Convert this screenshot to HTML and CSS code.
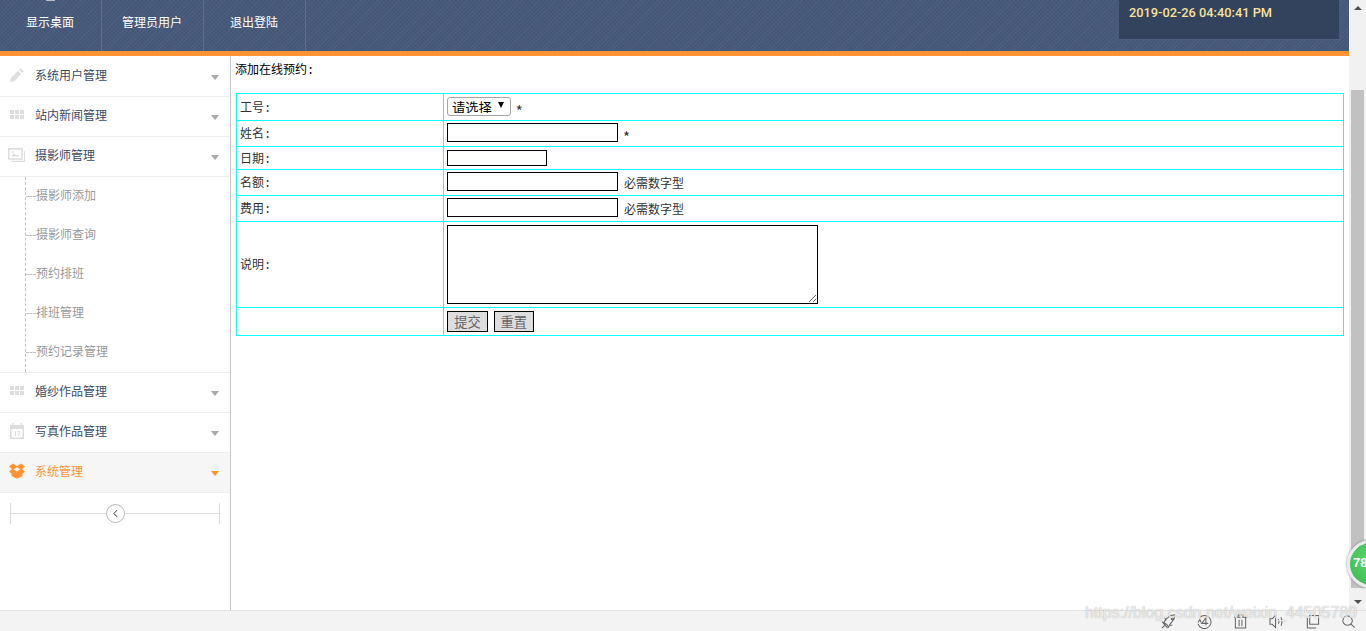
FILE: index.html
```html
<!DOCTYPE html>
<html lang="en">
<head>
    <meta charset="UTF-8">
    <meta name="viewport" content="width=device-width, initial-scale=1.0">
    <title>添加在线预约</title>
    <link rel="stylesheet" href="styles.css">
</head>
<body>
    <div class="window">
        <div class="page">
            <header class="topbar">
                <span class="logo-edge"></span>
                <nav class="topnav">
                    <a class="topnav-item">显示桌面</a>
                    <a class="topnav-item">管理员用户</a>
                    <a class="topnav-item">退出登陆</a>
                </nav>
                <div class="clock">2019-02-26 04:40:41 PM</div>
            </header>
            <div class="main">
                <aside class="sidebar">
                    <div class="menu-item">
                        <svg class="menu-icon" viewBox="0 0 16 16"><path d="M11.500 1.200l3.300 3.300-1.600 1.600-3.300-3.300zM9 3.700l3.300 3.300-7.200 7.200-4.100.9.900-4.200z"/></svg>
                        <span class="menu-label">系统用户管理</span>
                        <i class="menu-arrow"></i>
                    </div>
                    <div class="menu-item">
                        <svg class="menu-icon" viewBox="0 0 16 16"><path d="M1 3h4v4H1zM6 3h4v4H6zM11 3h4v4h-4zM1 8h4v4H1zM6 8h4v4H6zM11 8h4v4h-4z"/></svg>
                        <span class="menu-label">站内新闻管理</span>
                        <i class="menu-arrow"></i>
                    </div>
                    <div class="menu-item">
                        <svg class="menu-icon menu-icon-wide" viewBox="0 0 16 16"><path fill-rule="evenodd" d="M0 1h14v11H0zM1.500 2.500v8h11v-8zM3 9l2.500-3 2 2 1.500-1 2 2zM3.500 4h2v1.500h-2zM15 4h1v10H3v-1h12z"/></svg>
                        <span class="menu-label">摄影师管理</span>
                        <i class="menu-arrow"></i>
                    </div>
                    <ul class="submenu">
                        <li class="submenu-item">摄影师添加</li>
                        <li class="submenu-item">摄影师查询</li>
                        <li class="submenu-item">预约排班</li>
                        <li class="submenu-item">排班管理</li>
                        <li class="submenu-item">预约记录管理</li>
                    </ul>
                    <div class="menu-item">
                        <svg class="menu-icon" viewBox="0 0 16 16"><path d="M1 3h4v4H1zM6 3h4v4H6zM11 3h4v4h-4zM1 8h4v4H1zM6 8h4v4H6zM11 8h4v4h-4z"/></svg>
                        <span class="menu-label">婚纱作品管理</span>
                        <i class="menu-arrow"></i>
                    </div>
                    <div class="menu-item">
                        <svg class="menu-icon" viewBox="0 0 16 16"><path fill-rule="evenodd" d="M1 2h2V0h1.500v2h7V0H13v2h2v14H1zM2.500 6v8.500h11V6zM6 8h1v5H6zM8.500 8H11v1l-1.200 4h-1l1.200-4H8.500z"/></svg>
                        <span class="menu-label">写真作品管理</span>
                        <i class="menu-arrow"></i>
                    </div>
                    <div class="menu-item is-active">
                        <svg class="menu-icon" viewBox="0 0 16 16"><path d="M4 .5l4 2.700L12 .5l4 3-3 2.600 3 2.600-2.500 1.800V13L8 15.800 2.500 13v-2.500L0 8.700l3-2.600-3-2.600zM8 4.300L4.600 6.300 8 8.500l3.400-2.200z"/></svg>
                        <span class="menu-label">系统管理</span>
                        <i class="menu-arrow"></i>
                    </div>
                    <div class="collapse-bar">
                        <button class="collapse-btn" type="button">
                            <svg viewBox="0 0 8 8"><path d="M5.500 1L2.500 4l3 3" fill="none" stroke="#222" stroke-width="0.800"/></svg>
                        </button>
                    </div>
                </aside>
                <section class="content">
                    <p class="content-title">添加在线预约:</p>
                    <table class="form-table">
                        <tr class="row-gonghao">
                            <td class="cell-label">工号:</td>
                            <td class="cell-field">
                                <span class="select-wrap"><select class="field-select"><option>请选择</option></select></span>
                                <span class="field-star field-star-first">*</span>
                            </td>
                        </tr>
                        <tr class="row-name">
                            <td class="cell-label">姓名:</td>
                            <td class="cell-field"><input class="field-input" type="text"><span class="field-star">*</span></td>
                        </tr>
                        <tr class="row-date">
                            <td class="cell-label">日期:</td>
                            <td class="cell-field"><input class="field-input field-date" type="text"></td>
                        </tr>
                        <tr class="row-num">
                            <td class="cell-label">名额:</td>
                            <td class="cell-field"><input class="field-input" type="text"><span class="field-note">必需数字型</span></td>
                        </tr>
                        <tr class="row-num">
                            <td class="cell-label">费用:</td>
                            <td class="cell-field"><input class="field-input" type="text"><span class="field-note">必需数字型</span></td>
                        </tr>
                        <tr class="row-desc">
                            <td class="cell-label">说明:</td>
                            <td class="cell-field"><textarea class="field-text"></textarea></td>
                        </tr>
                        <tr class="row-actions">
                            <td class="cell-label"></td>
                            <td class="cell-field">
                                <button class="form-btn" type="button">提交</button>
                                <button class="form-btn" type="button">重置</button>
                            </td>
                        </tr>
                    </table>
                </section>
            </div>
        </div>
        <div class="scrollbar">
            <i class="scroll-up"></i>
            <div class="scroll-track"><div class="scroll-thumb"></div></div>
            <i class="scroll-down"></i>
        </div>
    </div>
    <footer class="statusbar">
        <svg class="status-icon" viewBox="0 0 16 16"><path d="M1 15l4-4M5 6l5-4.500 4.500-.5-.5 4.500L9.500 11 8 14l-2-3-3-2zM4 4l1.500 3M9 12l3 0M12 4a1 1 0 1 1-.01 0M1 8l6 7"/></svg>
        <svg class="status-icon" viewBox="0 0 16 16"><path d="M3 3.500a7 7 0 1 1-1.800 7M1 9l2-3 1.500 3M9.500 4L5 10h7M9.500 4v8"/></svg>
        <svg class="status-icon" viewBox="0 0 16 16"><path d="M1 3.500h14M5.500 3.500V1h5v2.500M2.500 3.500V15h11V3.500M6.500 6v7M9.500 6v7"/></svg>
        <svg class="status-icon" viewBox="0 0 16 16"><path d="M7 1.500L3.500 5H1v6h2.500L7 14.500zM10 5.500c.8 1.600.8 3.400 0 5M12.800 3.500c1.300 2.900 1.300 6.100 0 9"/></svg>
        <svg class="status-icon" viewBox="0 0 16 16"><path d="M5 1.500h9.500V11H5zM2.500 4v11H12"/></svg>
        <svg class="status-icon" viewBox="0 0 16 16"><path d="M7 2a5 5 0 1 0 .01 0M10.500 10.500l4 4"/></svg>
    </footer>
    <div class="speed-ball"><span class="speed-num">78</span></div>
    <div class="watermark">https://blog.csdn.net/weixin_44505789</div>
</body>
</html>
```

FILE: styles.css
```css
* {
    box-sizing: border-box;
}

body {
    margin: 0;
    height: 100vh;
    overflow: hidden;
    position: relative;
    display: flex;
    flex-direction: column;
    background: #fff;
    color: #333;
    font-family: "Noto Sans CJK SC", "Liberation Sans", sans-serif;
    font-size: 12px;
}

.window {
    flex: 1;
    min-height: 0;
    display: flex;
}

.page {
    flex: 1;
    min-width: 0;
    display: flex;
    flex-direction: column;
}

/* top bar */
.topbar {
    height: 56px;
    flex: none;
    position: relative;
    display: flex;
    justify-content: space-between;
    border-bottom: 5px solid #ff9334;
    background-color: #47597a;
    background-image:
        repeating-linear-gradient(135deg, rgba(255, 255, 255, 0.035) 0, rgba(255, 255, 255, 0.035) 1px, transparent 1px, transparent 3px),
        repeating-linear-gradient(45deg, rgba(0, 0, 0, 0.04) 0, rgba(0, 0, 0, 0.04) 1px, transparent 1px, transparent 3px);
}

.logo-edge {
    position: absolute;
    left: 46px;
    top: 0;
    width: 9px;
    height: 1px;
    background: #b9bdc6;
}

.topnav {
    display: flex;
}

.topnav-item {
    width: 102px;
    padding: 13px 1px 0 0;
    line-height: 17px;
    text-align: center;
    color: #fff;
    border-right: 1px solid #5c6d8d;
}

.clock {
    width: 220px;
    height: 40px;
    margin-right: 10px;
    padding: 5px 10px;
    background: #34435d;
    border-bottom: 1px solid #4f6180;
    color: #f7e09c;
    font-family: Roboto, "Liberation Sans", sans-serif;
    font-size: 12.800px;
    font-weight: 500;
    line-height: 16px;
}

.main {
    flex: 1;
    min-height: 0;
    display: flex;
}

/* sidebar */
.sidebar {
    width: 231px;
    flex: none;
    padding-top: 1px;
    border-right: 1px solid #c8c8c8;
}

.menu-item {
    height: 40px;
    display: flex;
    align-items: center;
    padding: 0 11px 5px 9px;
    border-bottom: 1px solid #eee;
    color: #3d4b66;
}

.menu-icon {
    width: 16px;
    height: 16px;
    margin-top: 2px;
    fill: #ddd;
    flex: none;
}

.menu-icon-wide {
    width: 17px;
    height: 17px;
    margin-left: -1px;
}

.menu-label {
    flex: 1;
    margin-left: 10px;
}

.menu-arrow {
    width: 0;
    height: 0;
    margin-top: 6px;
    border-left: 4.500px solid transparent;
    border-right: 4.500px solid transparent;
    border-top: 5px solid #aaa;
}

.is-active {
    background: #f6f6f6;
    color: #ff9334;
}

.is-active .menu-icon {
    fill: #ff9334;
}

.is-active .menu-arrow {
    border-top-color: #ff9334;
}

.submenu {
    margin: 0 0 0 25px;
    padding: 0;
    list-style: none;
    height: 195px;
    border-left: 1px dashed #c4c4c4;
}

.submenu-item {
    height: 39px;
    display: flex;
    align-items: center;
    padding-bottom: 5px;
    color: #999;
}

.submenu-item::before {
    content: "";
    position: relative;
    top: 2px;
    width: 10px;
    border-top: 1px dashed #c4c4c4;
}

.submenu + .menu-item {
    height: 41px;
    border-top: 1px solid #eee;
}

.collapse-bar {
    height: 21px;
    margin: 10px 10px 0;
    display: flex;
    justify-content: center;
    align-items: center;
    border-left: 1px solid #ddd;
    border-right: 1px solid #ddd;
    background: linear-gradient(#ddd, #ddd) center / 100% 1px no-repeat;
}

.collapse-btn {
    width: 19px;
    height: 19px;
    padding: 0;
    border: 1px solid #bbb;
    border-radius: 50%;
    background: #fff;
    display: flex;
    align-items: center;
    justify-content: center;
}

.collapse-btn svg {
    width: 9px;
    height: 9px;
}

/* form */
.content {
    flex: 1;
    min-width: 0;
    padding: 4px 5px 0;
}

.content-title {
    margin: 0 0 11px -1px;
    height: 22px;
    line-height: 22px;
    color: #000;
    font-family: "Liberation Mono", "Noto Sans CJK SC", monospace;
}

.form-table {
    width: 100%;
    border-collapse: collapse;
    table-layout: fixed;
}

.form-table td {
    padding: 0 0 0 3px;
    border: 1px solid #1ff;
    vertical-align: middle;
}

.form-table .cell-label {
    width: 207px;
    padding-top: 2px;
    line-height: 16px;
    font-family: "Liberation Mono", "Noto Sans CJK SC", monospace;
}

.form-table .row-gonghao .cell-label,
.form-table .row-date .cell-label {
    padding-top: 4px;
}

.row-gonghao { height: 27px; }
.row-name { height: 26px; }
.row-date { height: 23px; }
.row-num { height: 26px; }
.row-desc { height: 86px; }
.row-actions { height: 28px; }

.field-input {
    width: 171px;
    height: 19px;
    padding: 0 2px;
    margin-bottom: 2px;
    border: 1px solid #000;
    vertical-align: middle;
}

.field-date {
    width: 100px;
    height: 16px;
}

.field-note {
    margin-left: 6px;
    line-height: 16px;
    vertical-align: middle;
}

.field-star {
    position: relative;
    top: 3px;
    margin-left: 5px;
    font-size: 15px;
    line-height: 16px;
    vertical-align: middle;
}

.field-star-first {
    top: 4px;
    margin-left: 2px;
}

.select-wrap {
    position: relative;
    display: inline-block;
    margin-bottom: 2px;
    vertical-align: middle;
}

.select-wrap::after {
    content: "";
    position: absolute;
    right: 7px;
    top: 5px;
    border-left: 3.500px solid transparent;
    border-right: 3.500px solid transparent;
    border-top: 6px solid #000;
}

.field-select {
    display: block;
    width: 64px;
    height: 19px;
    padding: 0 0 2px 4px;
    border: 1px solid #a6a6a6;
    border-radius: 3px;
    background: #fff;
    appearance: none;
    color: #000;
    font-family: "Noto Sans CJK SC", sans-serif;
    font-size: 13.300px;
}

.field-text {
    display: block;
    width: 371px;
    height: 79px;
    border: 1px solid #000;
}

.form-btn {
    width: 41px;
    height: 21px;
    padding: 0;
    margin-right: 3px;
    border: 1px solid #000;
    background: #ddd;
    color: #666;
    font-family: "Noto Sans CJK SC", sans-serif;
    font-size: 13.300px;
    line-height: 17px;
    vertical-align: middle;
}

.form-btn + .form-btn {
    width: 40px;
}

/* scrollbar */
.scrollbar {
    width: 17px;
    flex: none;
    display: flex;
    flex-direction: column;
    align-items: center;
    background: #f1f1f1;
}

.scroll-up {
    margin-top: 6px;
    border-left: 4px solid transparent;
    border-right: 4px solid transparent;
    border-bottom: 4px solid #505050;
}

.scroll-track {
    flex: 1;
    width: 100%;
    padding: 80px 2px 12px 2px;
}

.scroll-thumb {
    height: 100%;
    background: #c1c1c1;
}

.scroll-down {
    margin-bottom: 6px;
    border-left: 4px solid transparent;
    border-right: 4px solid transparent;
    border-top: 4px solid #505050;
}

/* status bar */
.statusbar {
    height: 21px;
    flex: none;
    display: flex;
    justify-content: flex-end;
    align-items: center;
    gap: 21px;
    padding-right: 10px;
    background: #f3f3f3;
    border-top: 1px solid #e2e2e2;
}

.status-icon {
    width: 15px;
    height: 15px;
    fill: none;
    stroke: #666;
    stroke-width: 1.100;
}

/* floating bits */
.speed-ball {
    position: absolute;
    left: 1347px;
    top: 540px;
    width: 48px;
    height: 48px;
    border: 3px solid #e9ecea;
    border-radius: 50%;
    background: radial-gradient(circle at 50% 40%, #5fd86f, #36b84e);
    box-shadow: 0 0 3px #888;
}

.speed-num {
    position: absolute;
    left: 3px;
    top: 13px;
    color: #fff;
    font-family: "Liberation Sans", sans-serif;
    font-size: 13px;
    font-weight: bold;
    line-height: 14px;
}

.watermark {
    position: absolute;
    left: 1085px;
    top: 603px;
    color: rgba(255, 255, 255, 0.75);
    font-family: "Liberation Sans", sans-serif;
    font-size: 16px;
    line-height: 19px;
    text-shadow: 0 0 1px rgba(120, 120, 120, 0.7);
    white-space: nowrap;
    pointer-events: none;
}
```
